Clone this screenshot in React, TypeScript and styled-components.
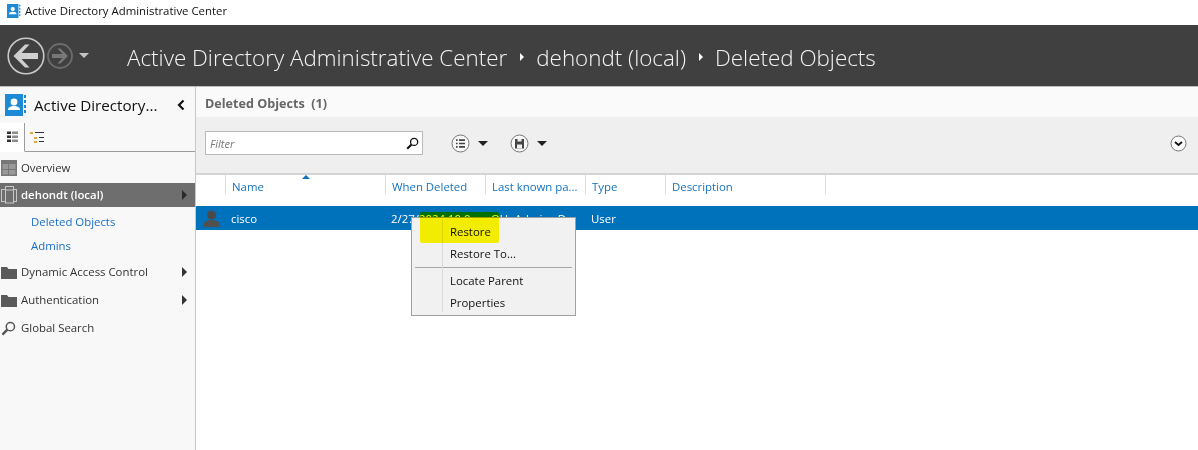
import React from "react";
import styled, { createGlobalStyle } from "styled-components";

const GlobalStyle = createGlobalStyle`
  html, body { margin: 0; padding: 0; background: #fff; }
  body { font-family: "Open Sans", "Noto Sans", "Liberation Sans", sans-serif; overflow: hidden; }
`;

const Window = styled.div`
  position: relative;
  width: 1198px;
  height: 450px;
  overflow: hidden;
  display: flex;
  flex-direction: column;
`;

const TitleBar = styled.div`
  height: 25px;
  display: flex;
  align-items: center;
  padding: 0 0 4px 6px;
  box-sizing: border-box;
  gap: 3px;
  font-size: 11.4px;
  color: #111;
`;

const Header = styled.div`
  height: 62px;
  background: #404040;
  border-bottom: 1px solid #bdbdbd;
  box-sizing: border-box;
  display: flex;
  align-items: center;
  padding-left: 7px;
`;

const NavButtons = styled.div`
  display: flex;
  align-items: center;
  width: 120px;
  gap: 2px;
`;

const Crumbs = styled.div`
  display: flex;
  align-items: center;
  font-size: 22.4px;
  font-weight: 300;
  color: #f4f4f4;
  white-space: nowrap;
  margin-top: 3px;
`;

const CrumbArrow = styled.span`
  width: 0;
  height: 0;
  margin: 0 12px 0 13px;
  border-left: 4px solid #fff;
  border-top: 4px solid transparent;
  border-bottom: 4px solid transparent;
`;

const Body = styled.div`
  flex: 1;
  display: flex;
  min-height: 0;
`;

const Sidebar = styled.aside`
  width: 196px;
  box-sizing: border-box;
  background: #f8f8f8;
  border-right: 1px solid #c8c8c8;
  display: flex;
  flex-direction: column;
`;

const SideHead = styled.div`
  height: 36px;
  display: flex;
  align-items: center;
  padding-left: 4px;
  font-size: 15.2px;
  color: #111;
`;

const SideTitle = styled.span`
  margin-left: 6px;
  width: 142px;
  white-space: nowrap;
`;

const Tabs = styled.div`
  height: 29px;
  display: flex;
  align-items: center;
  border-bottom: 1px solid #9c9c9c;
  box-sizing: border-box;
`;

const Tab = styled.div<{ $active?: boolean }>`
  width: 25px;
  height: 29px;
  box-sizing: border-box;
  display: flex;
  align-items: center;
  justify-content: center;
  background: ${(p) => (p.$active ? "#fff" : "transparent")};
  border-right: ${(p) => (p.$active ? "1px solid #9c9c9c" : "none")};
  ${(p) => p.$active && "border-bottom: 1px solid #fff;"}
`;

const NavList = styled.nav`
  display: flex;
  flex-direction: column;
  padding-top: 4px;
`;

const NavItem = styled.div<{ $selected?: boolean; $sub?: boolean; $gap?: number }>`
  height: 24px;
  margin-top: ${(p) => p.$gap ?? 0}px;
  display: flex;
  align-items: center;
  padding-left: ${(p) => (p.$sub ? 31 : 1)}px;
  font-size: 11.4px;
  font-weight: ${(p) => (p.$selected ? 600 : 400)};
  color: ${(p) => (p.$selected ? "#fff" : p.$sub ? "#1a6ecb" : "#333")};
  background: ${(p) => (p.$selected ? "#6e6e6e" : "transparent")};
`;

const NavIcon = styled.span`
  width: 20px;
  display: flex;
  align-items: center;
`;

const NavLabel = styled.span`
  flex: 1;
  white-space: nowrap;
  position: relative;
  top: -1px;
`;

const NavArrow = styled.span<{ $dark?: boolean }>`
  width: 0;
  height: 0;
  margin-right: 8px;
  border-left: 5px solid ${(p) => (p.$dark ? "#2a2a2a" : "#333")};
  border-top: 5px solid transparent;
  border-bottom: 5px solid transparent;
`;

const Main = styled.main`
  flex: 1;
  display: flex;
  flex-direction: column;
  min-width: 0;
`;

const MainHead = styled.div`
  height: 30px;
  display: flex;
  align-items: center;
  padding: 3px 0 0 9px;
  box-sizing: border-box;
  background: #fafafa;
  font-size: 12.6px;
  font-weight: 700;
  color: #666;
  white-space: pre;
`;

const Toolbar = styled.div`
  height: 58px;
  box-sizing: border-box;
  background: #efefef;
  border-bottom: 2px solid #d4d4d4;
  display: flex;
  align-items: center;
  padding: 0 11px 4px 9px;
`;

const Filter = styled.div`
  width: 218px;
  height: 24px;
  box-sizing: border-box;
  background: #fff;
  border: 1px solid #b9b9b9;
  display: flex;
  align-items: center;
  justify-content: space-between;
  padding: 0 3px 0 4px;
  font-size: 11px;
  font-style: italic;
  color: #777;
`;

const ToolGroup = styled.div<{ $left: number }>`
  display: flex;
  align-items: center;
  gap: 8px;
  margin-left: ${(p) => p.$left}px;
`;

const Caret = styled.span<{ $light?: boolean }>`
  width: 0;
  height: 0;
  margin-left: ${(p) => (p.$light ? 4 : 0)}px;
  border-top: 5px solid ${(p) => (p.$light ? "#c4c4c4" : "#222")};
  border-left: 5px solid transparent;
  border-right: 5px solid transparent;
`;

const Spacer = styled.div`
  flex: 1;
`;

const ColumnRow = styled.div`
  position: relative;
  height: 31px;
  display: grid;
  grid-template-columns: 30px 160px 100px 100px 80px 160px;
`;

const SortMark = styled.span`
  position: absolute;
  left: 106px;
  top: 0;
  width: 0;
  height: 0;
  border-bottom: 4px solid #0f6fb8;
  border-left: 4px solid transparent;
  border-right: 4px solid transparent;
`;

const ColumnHead = styled.div`
  height: 19px;
  box-sizing: border-box;
  border-right: 1px solid #dcdcdc;
  padding: 4px 0 0 6px;
  font-size: 11.4px;
  color: #1573bd;
  white-space: nowrap;
`;

const Row = styled.div`
  height: 24px;
  background: #0072bc;
  color: #fff;
  font-size: 11.4px;
  display: grid;
  grid-template-columns: 29px 160px 100px 100px 80px;
  align-items: center;
`;

const Cell = styled.div`
  padding-left: 6px;
  white-space: nowrap;
  overflow: hidden;
`;

const UserCell = styled.div`
  padding-left: 7px;
  display: flex;
  align-items: center;
`;

const Menu = styled.div`
  position: absolute;
  left: 411px;
  top: 217px;
  width: 165px;
  height: 99px;
  box-sizing: border-box;
  background: #f1f1f1;
  border: 1px solid #a0a0a0;
  padding: 2px 2px 0;
  display: flex;
  flex-direction: column;
  font-size: 11.4px;
  color: #111;
`;

const MenuGutter = styled.span`
  position: absolute;
  left: 30px;
  top: 2px;
  bottom: 3px;
  width: 1px;
  background: #d9d9d9;
`;

const MenuItem = styled.div`
  height: 22px;
  flex-shrink: 0;
  display: flex;
  align-items: center;
  padding-left: 36px;
`;

const MenuRule = styled.div`
  height: 1px;
  flex-shrink: 0;
  background: #a6a6a6;
  margin: 3px 1px 1px;
`;

const Highlight = styled.div`
  position: absolute;
  left: 420px;
  top: 212px;
  width: 79px;
  height: 31px;
  background: #fffa00;
  border-radius: 2px;
  mix-blend-mode: multiply;
`;

const AppBadge = ({ size }: { size: number }) => (
  <svg width={size + 2} height={size} viewBox="0 0 22 22">
    <rect x="0" y="0" width="18" height="22" fill="#1e8ad6" />
    <circle cx="9" cy="8" r="3.4" fill="#fff" />
    <path d="M3 16c0-3 3-4 6-4s6 1 6 4z" fill="#fff" />
    <path d="M20 1v3M20 6v3M20 11v3M20 16v3" stroke="#1e8ad6" strokeWidth="2" />
  </svg>
);

const BackButton = () => (
  <svg width="38" height="38" viewBox="0 0 38 38">
    <circle cx="19" cy="19" r="17.800" fill="none" stroke="#c9c9c9" strokeWidth="1.600" />
    <path d="M6.500 19L18 7.500h4.500L14.500 16H31v6H14.500l8 8.500H18z" fill="#cfcfcf" />
  </svg>
);

const ForwardButton = () => (
  <svg width="26" height="26" viewBox="0 0 26 26">
    <circle cx="13" cy="13" r="12" fill="none" stroke="#6c6c6c" strokeWidth="1.800" />
    <path d="M21 13l-7.500-7.500h-3L15.500 11H5v4h10.500l-5 5.500h3z" fill="#777" />
  </svg>
);

const FolderIcon = () => (
  <svg width="16" height="13" viewBox="0 0 16 13">
    <path d="M0 1h6l1.500 2H16v10H0z" fill="#5a5a5a" />
  </svg>
);

const GridIcon = () => (
  <svg width="16" height="16" viewBox="0 0 16 16">
    <rect x="0" y="0" width="16" height="16" fill="#777" />
    <path d="M1.500 4h5.500v5H1.500zM8 4h6.500v5H8zM1.500 10h5.500v4.500H1.500zM8 10h6.500v4.500H8z" fill="#999" />
  </svg>
);

const DomainIcon = () => (
  <svg width="17" height="18" viewBox="0 0 17 18" fill="none" stroke="#c8c8c8">
    <rect x="0.500" y="3.500" width="15" height="12" />
    <rect x="4.500" y="0.500" width="8" height="16.500" fill="#6e6e6e" />
    <path d="M4.500 4h8" />
  </svg>
);

const SearchIcon = ({ size, color }: { size: number; color: string }) => (
  <svg width={size} height={size} viewBox="0 0 16 16" fill="none" stroke={color}>
    <circle cx="10" cy="6" r="4.400" strokeWidth="1.600" />
    <path d="M6.800 9.200L1.500 14.500" strokeWidth="2.600" />
  </svg>
);

const ListCircle = () => (
  <svg width="19" height="19" viewBox="0 0 19 19" fill="none">
    <circle cx="9.500" cy="9.500" r="8.500" fill="#f8f8f8" stroke="#777" />
    <path d="M5 6.200h1.600M5 9.500h1.600M5 12.800h1.600M8 6.200h6M8 9.500h6M8 12.800h6" stroke="#444" strokeWidth="1.700" />
  </svg>
);

const SaveCircle = () => (
  <svg width="19" height="19" viewBox="0 0 19 19" fill="none">
    <circle cx="9.500" cy="9.500" r="8.500" fill="#f8f8f8" stroke="#777" />
    <path d="M5 5h9v9.500H5z" fill="#444" />
    <path d="M7.500 5h4v2.500h-4zM7 10.500h5v4H7z" fill="#eee" />
  </svg>
);

const ChevronCircle = () => (
  <svg width="17" height="17" viewBox="0 0 17 17" fill="none">
    <circle cx="8.500" cy="8.500" r="7.500" fill="#fafafa" stroke="#777" />
    <path d="M5 7l3.500 3L12 7" stroke="#111" strokeWidth="1.800" />
  </svg>
);

const UserIcon = () => (
  <svg width="17" height="17" viewBox="0 0 17 17">
    <circle cx="8.500" cy="5" r="4.500" fill="#4a4a4a" />
    <path d="M0.500 17v-2.500c0-3 4-4.500 8-4.500s8 1.500 8 4.500V17z" fill="#505050" />
  </svg>
);

const ListTabIcon = () => (
  <svg width="11" height="12" viewBox="0 0 11 12">
    <path d="M0 0.500h4v2.500H0zM0 4.500h4v2.500H0zM0 8.500h4v2.500H0z" fill="#333" />
    <path d="M5 0.500h6v2.500H5zM5 4.500h6v2.500H5zM5 8.500h6v2.500H5z" fill="#8c8c8c" />
  </svg>
);

const TreeTabIcon = () => (
  <svg width="15" height="13" viewBox="0 0 15 13">
    <path d="M0 1h3v2H0zM4 6h3v2H4zM4 10h3v2H4z" fill="#e0a93a" />
    <path d="M5 1.500h9M9 6.500h5M9 10.500h5" stroke="#333" />
  </svg>
);

const columns = ["Name", "When Deleted", "Last known pa...", "Type", "Description"];

export default function App() {
  return (
    <Window>
      <GlobalStyle />
      <TitleBar>
        <AppBadge size={14} />
        Active Directory Administrative Center
      </TitleBar>
      <Header>
        <NavButtons>
          <BackButton />
          <ForwardButton />
          <Caret $light />
        </NavButtons>
        <Crumbs>
          Active Directory Administrative Center
          <CrumbArrow />
          dehondt (local)
          <CrumbArrow />
          Deleted Objects
        </Crumbs>
      </Header>
      <Body>
        <Sidebar>
          <SideHead>
            <AppBadge size={22} />
            <SideTitle>Active Directory...</SideTitle>
            <svg width="10" height="12" viewBox="0 0 10 12" fill="none">
              <path d="M7.500 1.500L3 6l4.500 4.500" stroke="#111" strokeWidth="2.200" />
            </svg>
          </SideHead>
          <Tabs>
            <Tab $active>
              <ListTabIcon />
            </Tab>
            <Tab>
              <TreeTabIcon />
            </Tab>
          </Tabs>
          <NavList>
            <NavItem>
              <NavIcon><GridIcon /></NavIcon>
              <NavLabel>Overview</NavLabel>
            </NavItem>
            <NavItem $selected $gap={3}>
              <NavIcon><DomainIcon /></NavIcon>
              <NavLabel>dehondt (local)</NavLabel>
              <NavArrow $dark />
            </NavItem>
            <NavItem $sub $gap={3}><NavLabel>Deleted Objects</NavLabel></NavItem>
            <NavItem $sub><NavLabel>Admins</NavLabel></NavItem>
            <NavItem $gap={2}>
              <NavIcon><FolderIcon /></NavIcon>
              <NavLabel>Dynamic Access Control</NavLabel>
              <NavArrow />
            </NavItem>
            <NavItem $gap={4}>
              <NavIcon><FolderIcon /></NavIcon>
              <NavLabel>Authentication</NavLabel>
              <NavArrow />
            </NavItem>
            <NavItem $gap={4}>
              <NavIcon><SearchIcon size={15} color="#555" /></NavIcon>
              <NavLabel>Global Search</NavLabel>
            </NavItem>
          </NavList>
        </Sidebar>
        <Main>
          <MainHead>{"Deleted Objects  (1)"}</MainHead>
          <Toolbar>
            <Filter>
              Filter
              <SearchIcon size={13} color="#111" />
            </Filter>
            <ToolGroup $left={28}>
              <ListCircle />
              <Caret />
            </ToolGroup>
            <ToolGroup $left={22}>
              <SaveCircle />
              <Caret />
            </ToolGroup>
            <Spacer />
            <ChevronCircle />
          </Toolbar>
          <ColumnRow>
            <ColumnHead />
            {columns.map((c) => (
              <ColumnHead key={c}>{c}</ColumnHead>
            ))}
            <SortMark />
          </ColumnRow>
          <Row>
            <UserCell><UserIcon /></UserCell>
            <Cell>cisco</Cell>
            <Cell>2/27/2024 10:0...</Cell>
            <Cell>OU=Admins,D...</Cell>
            <Cell>User</Cell>
          </Row>
        </Main>
      </Body>
      <Menu>
        <MenuGutter />
        <MenuItem>Restore</MenuItem>
        <MenuItem>Restore To...</MenuItem>
        <MenuRule />
        <MenuItem>Locate Parent</MenuItem>
        <MenuItem>Properties</MenuItem>
      </Menu>
      <Highlight />
    </Window>
  );
}
